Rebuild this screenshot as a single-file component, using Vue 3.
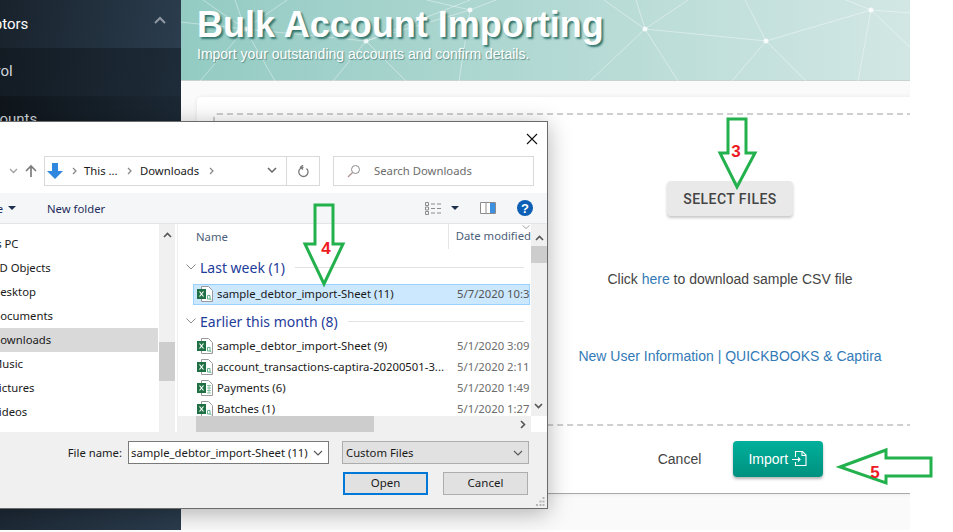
<script setup>
const navItems = [
  { label: "This PC", indent: 39 },
  { label: "3D Objects", indent: 52 },
  { label: "Desktop", indent: 51 },
  { label: "Documents", indent: 51 },
  { label: "Downloads", indent: 51, active: true },
  { label: "Music", indent: 51 },
  { label: "Pictures", indent: 51 },
  { label: "Videos", indent: 51 },
  { label: "OS (C:)", indent: 51 },
];

const recentFiles = [
  { name: "sample_debtor_import-Sheet (9)", date: "5/1/2020 3:09 PM", kind: "csv" },
  { name: "account_transactions-captira-20200501-3...", date: "5/1/2020 2:11 PM", kind: "csv" },
  { name: "Payments (6)", date: "5/1/2020 1:49 PM", kind: "xls" },
  { name: "Batches (1)", date: "5/1/2020 1:27 PM", kind: "csv" },
];

const netNodes = [
  [65, 29], [290, 10], [186, 41], [465, 29], [586, 41], [691, 10],
];

const netLines = [
  [65, 29, 0, 22], [65, 29, 23, 0], [65, 29, 55, 0], [65, 29, 107, 0], [65, 29, 20, 81], [65, 29, 95, 81],
  [65, 29, 186, 41], [290, 10, 247, 0], [290, 10, 316, 0], [290, 10, 186, 41], [290, 10, 279, 81],
  [186, 41, 153, 81], [186, 41, 226, 81], [186, 41, 290, 0], [465, 29, 586, 41], [586, 41, 691, 10],
  [465, 29, 508, 0], [465, 29, 456, 0], [465, 29, 424, 0], [465, 29, 410, 81], [465, 29, 498, 81],
  [586, 41, 552, 81], [586, 41, 626, 81], [586, 41, 565, 0], [691, 10, 678, 81], [691, 10, 730, 47],
  [691, 10, 730, 13], [691, 10, 666, 0],
];
</script>

<template>
  <div class="screen">
    <aside class="sidebar">
      <div class="side-row side-open">
        <span class="side-label">Debtors</span>
        <svg class="side-caret" width="12" height="8" viewBox="0 0 12 8"><path d="M1 7l5-5 5 5" fill="none" stroke="#8f99a3" stroke-width="2" /></svg>
      </div>
      <div class="side-row side-sub"><span class="side-label short">Control</span></div>
      <div class="side-row side-deep"><span class="side-label wide">Accounts</span></div>
    </aside>

    <main class="main">
      <header class="banner">
        <svg class="net" width="730" height="81" viewBox="0 0 730 81">
          <line v-for="(l, i) in netLines" :key="i" :x1="l[0]" :y1="l[1]" :x2="l[2]" :y2="l[3]" stroke="#fff" stroke-opacity="0.4" />
          <circle v-for="(n, i) in netNodes" :key="i" :cx="n[0]" :cy="n[1]" r="2.5" fill="#fff" fill-opacity="0.8" />
        </svg>
        <h1 class="title">Bulk Account Importing</h1>
        <p class="subtitle">Import your outstanding accounts and confirm details.</p>
      </header>

      <div class="content">
        <section class="card">
          <div class="dropzone">
            <button class="select-btn">SELECT FILES</button>
            <p class="sample">Click <a>here</a> to download sample CSV file</p>
            <p class="links"><a>New User Information | QUICKBOOKS &amp; Captira</a></p>
          </div>
          <div class="card-foot">
            <span class="cancel">Cancel</span>
            <button class="import-btn">
              Import
              <svg width="17" height="17" viewBox="0 0 17 17" fill="none" stroke="#fff" stroke-width="1.1">
                <path d="M4.5 7V1.5h7l3.5 3.5v10.500H4.5V12" />
                <path d="M11 1.5V5.500h4" />
                <path d="M1 9.500h8M7 7.500l2 2-2 2" />
              </svg>
            </button>
          </div>
        </section>
      </div>
    </main>

    <div class="dialog">
      <div class="dlg-title">
        <svg width="12" height="12" viewBox="0 0 12 12"><path d="M1 1l10 10M11 1L1 11" stroke="#111" stroke-width="1.1" /></svg>
      </div>

      <div class="dlg-address">
        <svg class="addr-down" width="9" height="6" viewBox="0 0 9 6"><path d="M1 1l3.500 3.500L8 1" fill="none" stroke="#a0a0a0" stroke-width="1.3" /></svg>
        <svg class="addr-up" width="14" height="14" viewBox="0 0 14 14"><path d="M7 13V2M2 7l5-5 5 5" fill="none" stroke="#7d7d7d" stroke-width="1.7" /></svg>
        <div class="addr-box">
          <svg class="addr-folder" width="16" height="16" viewBox="0 0 16 16"><path d="M5 0h6v8h5l-8 8-8-8h5z" fill="#2f87de" /></svg>
          <svg class="crumb-sep" width="5" height="8" viewBox="0 0 5 8"><path d="M1 1l3 3-3 3" fill="none" stroke="#8a8a8a" stroke-width="1.3" /></svg>
          <span class="crumb crumb-this">This ...</span>
          <svg class="crumb-sep" width="5" height="8" viewBox="0 0 5 8"><path d="M1 1l3 3-3 3" fill="none" stroke="#8a8a8a" stroke-width="1.3" /></svg>
          <span class="crumb crumb-down">Downloads</span>
          <svg class="crumb-sep" width="5" height="8" viewBox="0 0 5 8"><path d="M1 1l3 3-3 3" fill="none" stroke="#8a8a8a" stroke-width="1.3" /></svg>
          <svg class="addr-more" width="10" height="7" viewBox="0 0 10 7"><path d="M1 1l4 4 4-4" fill="none" stroke="#666" stroke-width="1.5" /></svg>
        </div>
        <div class="addr-refresh">
          <svg width="12" height="13" viewBox="0 0 12 13"><path d="M9.500 3.500a4.600 4.600 0 1 1-3-1.200H3.500M6 0L3.500 2.300 6 4.500" fill="none" stroke="#7a7a7a" stroke-width="1.3" /></svg>
        </div>
        <div class="search-box">
          <svg width="14" height="14" viewBox="0 0 14 14"><circle cx="8.500" cy="5.500" r="4" fill="none" stroke="#8a8a8a" /><path d="M5.500 8.500L1 13" stroke="#b08f8f" stroke-width="1.2" /></svg>
          <span>Search Downloads</span>
        </div>
      </div>

      <div class="dlg-toolbar">
        <span class="tool-organize">Organize</span>
        <svg class="tool-caret" width="8" height="4" viewBox="0 0 8 4"><path d="M0 0h8L4 4z" fill="#1e3050" /></svg>
        <span class="tool-new">New folder</span>
        <svg class="tool-view" width="16" height="13" viewBox="0 0 16 13" fill="none" stroke="#8c8c8c">
          <path d="M.5.5h3v3h-3zM.5 5h3v3h-3zM.5 9.500h3v3h-3zM6 2h4M12 2h4M6 6.500h4M12 6.500h4M6 11h4M12 11h4" />
        </svg>
        <svg class="tool-caret2" width="8" height="4" viewBox="0 0 8 4"><path d="M0 0h8L4 4z" fill="#1e3050" /></svg>
        <svg class="tool-pane" width="16" height="12" viewBox="0 0 16 12"><path d="M.5.5h15v11H.5z" fill="#fff" stroke="#8c8c8c" /><path d="M6 .5v11" stroke="#8c8c8c" /><path d="M10 1h5v10h-5z" fill="#3d8fe0" /></svg>
        <span class="tool-help">?</span>
      </div>

      <div class="dlg-body">
        <nav class="nav-list">
          <div
            v-for="item in navItems"
            :key="item.label"
            class="nav-item"
            :class="{ active: item.active }"
            :style="{ paddingLeft: item.indent + 'px' }"
          >{{ item.label }}</div>
        </nav>
        <div class="nav-scroll">
          <svg width="9" height="6" viewBox="0 0 9 6"><path d="M1 5l3.500-3.500L8 5" fill="none" stroke="#555" stroke-width="1.6" /></svg>
          <div class="nav-thumb"></div>
        </div>

        <div class="files">
          <div class="files-main">
            <div class="file-list">
              <div class="col-head">
                <span class="col-name">Name</span>
                <span class="col-date">Date modified</span>
                <svg class="col-sort" width="8" height="4" viewBox="0 0 8 4"><path d="M.5.5L4 3.500 7.500.5" fill="none" stroke="#a5a5a5" /></svg>
              </div>

              <div class="group first">
                <svg width="10" height="6" viewBox="0 0 10 6"><path d="M.5.5L5 5 9.500.5" fill="none" stroke="#8a8a8a" /></svg>
                <span class="group-name">Last week (1)</span>
                <span class="group-rule"></span>
              </div>
              <div class="file-row selected">
                <svg width="16" height="16" viewBox="0 0 16 16">
                  <path d="M4.500.5h7l4 4v11h-11z" fill="#fff" stroke="#9a9a9a" />
                  <rect x="0" y="3" width="9" height="10" fill="#1f7145" />
                  <path d="M2.500 5.500l4 5M6.500 5.500l-4 5" stroke="#fff" stroke-width="1.2" />
                  <path d="M10.500 9.500h2.500v3.500h-2.500zM13 13l1.500 1" fill="none" stroke="#5eb28a" />
                </svg>
                <span class="file-name">sample_debtor_import-Sheet (11)</span>
                <span class="file-date">5/7/2020 10:32 AM</span>
              </div>

              <div class="group">
                <svg width="10" height="6" viewBox="0 0 10 6"><path d="M.5.5L5 5 9.500.5" fill="none" stroke="#8a8a8a" /></svg>
                <span class="group-name">Earlier this month (8)</span>
                <span class="group-rule"></span>
              </div>
              <div class="recent">
                <div v-for="file in recentFiles" :key="file.name" class="file-row">
                  <svg width="16" height="16" viewBox="0 0 16 16">
                    <path d="M4.500.5h7l4 4v11h-11z" fill="#fff" stroke="#9a9a9a" />
                    <rect x="0" y="3" width="9" height="10" fill="#1f7145" />
                    <path d="M2.500 5.500l4 5M6.500 5.500l-4 5" stroke="#fff" stroke-width="1.2" />
                    <path v-if="file.kind === 'csv'" d="M10.500 9.500h2.500v3.500h-2.500zM13 13l1.500 1" fill="none" stroke="#5eb28a" />
                    <path v-else d="M10 5.500h4M10 8h4M10 10.500h4M10 13h4M12 5v8" fill="none" stroke="#6fb592" stroke-width="0.8" />
                  </svg>
                  <span class="file-name">{{ file.name }}</span>
                  <span class="file-date">{{ file.date }}</span>
                </div>
              </div>
            </div>
            <div class="v-scroll">
              <svg width="9" height="6" viewBox="0 0 9 6"><path d="M1 5l3.500-3.500L8 5" fill="none" stroke="#555" stroke-width="1.6" /></svg>
              <div class="v-thumb"></div>
              <svg class="v-down" width="9" height="6" viewBox="0 0 9 6"><path d="M1 1l3.500 3.500L8 1" fill="none" stroke="#555" stroke-width="1.6" /></svg>
            </div>
          </div>
          <div class="h-scroll">
            <div class="h-track">
              <div class="h-thumb"></div>
              <svg width="6" height="9" viewBox="0 0 6 9"><path d="M1 1l3.500 3.500L1 8" fill="none" stroke="#555" stroke-width="1.6" /></svg>
            </div>
          </div>
        </div>
      </div>

      <div class="dlg-foot">
        <div class="foot-row">
          <span class="foot-label">File name:</span>
          <div class="foot-input">
            <span>sample_debtor_import-Sheet (11)</span>
            <svg width="10" height="6" viewBox="0 0 10 6"><path d="M1 1l4 4 4-4" fill="none" stroke="#555" stroke-width="1.1" /></svg>
          </div>
          <div class="foot-filter">
            <span>Custom Files</span>
            <svg width="10" height="6" viewBox="0 0 10 6"><path d="M1 1l4 4 4-4" fill="none" stroke="#555" stroke-width="1.1" /></svg>
          </div>
        </div>
        <div class="foot-row buttons">
          <button class="win-btn primary">Open</button>
          <button class="win-btn">Cancel</button>
        </div>
        <svg class="grip" width="9" height="9" viewBox="0 0 9 9" fill="#b5b5b5">
          <path d="M6.500 0h2v2h-2zM3.500 3.500h2v2h-2zM6.500 3.500h2v2h-2zM0 7h2v2H0zM3.500 7h2v2h-2zM6.500 7h2v2h-2z" />
        </svg>
      </div>
    </div>

    <svg class="marks" width="953" height="532" viewBox="0 0 953 532">
      <g fill="none" stroke="#22b14c" stroke-width="3">
        <polygon points="728,119 746,119 746,153 755,153 737,187 720,153 728,153" />
        <polygon points="315,205 333,205 333,244 343,244 324,284 305,244 315,244" />
        <polygon points="840,467 886,450 886,458 931,458 931,476 886,476 886,483" />
      </g>
      <g class="mark-text">
        <text x="736" y="157" text-anchor="middle">3</text>
        <text x="326" y="254" text-anchor="middle">4</text>
        <text x="875" y="478" text-anchor="middle">5</text>
      </g>
    </svg>
  </div>
</template>

<style scoped>
.screen {
  position: relative;
  display: flex;
  width: 953px;
  height: 532px;
  overflow: hidden;
  background: #fff;
  font-family: "Liberation Sans", sans-serif;
}

.sidebar {
  width: 181px;
  height: 530px;
  flex: none;
  background: linear-gradient(100deg, #16202a, #2b3c4d);
  color: #cfd5da;
  font-family: Roboto, sans-serif;
  font-size: 15px;
}
.side-row {
  position: relative;
  display: flex;
  align-items: center;
  height: 48px;
}
.side-open {
  background: linear-gradient(100deg, #18222c, #2b3d4e);
  color: #fff;
}
.side-sub {
  background: linear-gradient(100deg, #131b23, #1e2c39);
  padding-bottom: 2px;
  box-sizing: border-box;
}
.side-deep {
  background: linear-gradient(100deg, #0f151b, #1c2935);
  padding-bottom: 2px;
  box-sizing: border-box;
}
.side-label {
  margin-left: -24px;
}
.side-label.short {
  margin-left: -36px;
}
.side-label.wide {
  margin-left: -26px;
}
.side-caret {
  position: absolute;
  left: 154px;
  top: 16px;
}

.main {
  width: 729px;
  height: 530px;
  flex: none;
  overflow: hidden;
  background: #fafafa;
}
.banner {
  position: relative;
  height: 81px;
  box-sizing: border-box;
  padding: 6px 0 0 16px;
  background: linear-gradient(90deg, #93cbc3, #d2e7e4);
  border-bottom: 1px solid #c9d2d0;
  color: #fff;
}
.net {
  position: absolute;
  left: -1px;
  top: 0;
}
.title {
  position: relative;
  margin: 0;
  font-size: 36px;
  line-height: 38px;
  font-weight: 700;
  text-shadow: 2px 2px 2px #34766f;
}
.subtitle {
  position: relative;
  margin: 1px 0 0;
  font-size: 14px;
  line-height: 18px;
  text-shadow: 1px 1px 1px #5a8f89;
}

.content {
  padding: 16px;
}
.card {
  display: flex;
  flex-direction: column;
  width: 1066px;
  height: 397px;
  box-sizing: border-box;
  padding: 16px 16px 0;
  background: #fff;
  border-bottom: 1px solid #a9a9a9;
  border-radius: 4px 4px 0 0;
  box-shadow: 0 0 4px rgba(0, 0, 0, 0.08);
}
.dropzone {
  display: flex;
  flex-direction: column;
  align-items: center;
  height: 313px;
  flex: none;
  box-sizing: border-box;
  padding-top: 66px;
  border: 2px dashed #cfcfcf;
  border-radius: 4px;
}
.select-btn {
  width: 126px;
  height: 35px;
  padding: 0;
  border: none;
  border-radius: 4px;
  background: #e9e9e9;
  box-shadow: 0 2px 3px rgba(0, 0, 0, 0.22);
  color: #444;
  font-family: Roboto, sans-serif;
  font-size: 14px;
  font-weight: 500;
  letter-spacing: 0.45px;
}
.sample {
  margin: 53px 0 0;
  color: #444;
  font-size: 14px;
  line-height: 20px;
}
.links {
  margin: 57px 0 0;
  font-size: 14px;
  line-height: 20px;
}
.sample a,
.links a {
  color: #337ab7;
}
.card-foot {
  display: flex;
  flex: 1;
  align-items: center;
  justify-content: center;
  gap: 32px;
  padding: 0 0 2px 21px;
}
.cancel {
  color: #444;
  font-size: 14px;
}
.import-btn {
  display: flex;
  align-items: center;
  justify-content: center;
  gap: 3px;
  width: 90px;
  height: 36px;
  padding: 0;
  border: none;
  border-radius: 4px;
  background: linear-gradient(180deg, #00b09b, #00917f);
  box-shadow: 0 2px 3px rgba(0, 0, 0, 0.3);
  color: #fff;
  font-family: inherit;
  font-size: 14px;
}

/* file picker window, hangs off the left edge of the page */
.dialog {
  position: absolute;
  left: -60px;
  top: 121px;
  display: flex;
  flex-direction: column;
  width: 608px;
  height: 388px;
  box-sizing: border-box;
  border: 1px solid #6b6b6b;
  background: #fff;
  box-shadow: 0 4px 22px rgba(0, 0, 0, 0.3);
  color: #1a1a1a;
  font-family: "Noto Sans", "Open Sans", sans-serif;
  font-size: 11.3px;
}
.dlg-title {
  display: flex;
  align-items: center;
  justify-content: flex-end;
  height: 34px;
  flex: none;
  padding-right: 9px;
  box-sizing: border-box;
}
.dlg-address {
  display: flex;
  align-items: center;
  height: 30px;
  flex: none;
  margin-bottom: 7px;
  padding-left: 68px;
}
.addr-down,
.addr-up {
  margin-right: 6px;
  flex: none;
}
.addr-box {
  display: flex;
  align-items: center;
  width: 243px;
  height: 30px;
  box-sizing: border-box;
  padding-left: 2px;
  padding-bottom: 1px;
  border: 1px solid #d9d9d9;
}
.addr-box svg {
  flex: none;
}
.addr-box .crumb-sep {
  margin-left: 9px;
}
.crumb-this {
  margin-left: 7px;
  width: 34px;
}
.crumb-down {
  margin-left: 8px;
  width: 60px;
}
.addr-box .addr-more {
  margin-left: auto;
  margin-right: 9px;
}
.crumb {
  white-space: nowrap;
}
.addr-refresh {
  display: flex;
  align-items: center;
  justify-content: center;
  width: 33px;
  height: 30px;
  box-sizing: border-box;
  border: 1px solid #d9d9d9;
  border-left: none;
}
.search-box {
  display: flex;
  align-items: center;
  gap: 13px;
  width: 201px;
  height: 30px;
  box-sizing: border-box;
  margin-left: 13px;
  padding-left: 13px;
  padding-bottom: 1px;
  border: 1px solid #d9d9d9;
  color: #6d6d6d;
}
.dlg-toolbar {
  display: flex;
  align-items: center;
  height: 31px;
  flex: none;
  box-sizing: border-box;
  background: #f5f6f7;
  border-bottom: 1px solid #e5e5e5;
  color: #1e2e5c;
}
.tool-organize {
  width: 48px;
  margin-left: 14px;
  text-align: right;
  white-space: nowrap;
}
.tool-caret {
  margin-left: 5px;
}
.tool-new {
  width: 60px;
  margin-left: 31px;
  white-space: nowrap;
}
.tool-view {
  margin-left: 318px;
}
.tool-caret2 {
  margin-left: 10px;
}
.tool-pane {
  margin-left: 21px;
}
.tool-help {
  display: flex;
  align-items: center;
  justify-content: center;
  width: 16px;
  height: 16px;
  margin-left: 21px;
  border-radius: 50%;
  background: #0c5fb4;
  color: #fff;
  font-family: "Liberation Sans", sans-serif;
  font-size: 13px;
  font-weight: 700;
}
.dlg-body {
  display: flex;
  height: 208px;
  flex: none;
}
.nav-list {
  width: 217px;
  flex: none;
  padding-top: 8px;
  box-sizing: border-box;
  overflow: hidden;
}
.nav-item {
  height: 24px;
  line-height: 24px;
  box-sizing: border-box;
  white-space: nowrap;
}
.nav-item.active {
  background: #d9d9d9;
}
.nav-scroll {
  width: 16px;
  flex: none;
  margin-left: 1px;
  padding-top: 8px;
  box-sizing: border-box;
  background: #f0f0f0;
}
.nav-scroll svg {
  display: block;
  margin: 0 auto;
}
.nav-thumb {
  height: 39px;
  margin-top: 104px;
  background: #cdcdcd;
}
.files {
  display: flex;
  flex-direction: column;
  flex: 1;
  min-width: 0;
  margin-left: 2px;
  border-left: 1px solid #eeeeee;
}
.files-main {
  display: flex;
  height: 192px;
  flex: none;
}
.file-list {
  flex: 1;
  min-width: 0;
  overflow: hidden;
}
.col-head {
  position: relative;
  display: flex;
  height: 26px;
  align-items: center;
  padding-bottom: 2px;
  box-sizing: border-box;
  color: #4c607a;
}
.col-name {
  width: 254px;
  margin-left: 18px;
}
.col-date {
  height: 26px;
  margin-left: 5px;
  padding-left: 7px;
  line-height: 26px;
  border-left: 1px solid #e5e5e5;
  white-space: nowrap;
}
.col-sort {
  position: absolute;
  left: 344px;
  top: 1px;
}
.group {
  display: flex;
  align-items: center;
  height: 24px;
  margin-left: 8px;
  margin-right: 7px;
  color: #1e3c9a;
  font-size: 14px;
}
.group svg {
  flex: none;
}
.group.first {
  margin-top: 5px;
  margin-bottom: 5px;
}
.group-name {
  margin-left: 4px;
  white-space: nowrap;
}
.group-rule {
  flex: 1;
  height: 1px;
  margin-left: 10px;
  background: #e3e3e3;
}
.recent {
  margin-top: 3px;
}
.file-row {
  display: flex;
  align-items: center;
  width: 337px;
  height: 21px;
  margin-left: 15px;
  padding-left: 4px;
  padding-bottom: 2px;
  box-sizing: border-box;
  overflow: hidden;
  white-space: nowrap;
}
.file-row svg {
  flex: none;
}
.file-row.selected {
  margin-bottom: 4px;
  background: #cce8ff;
  border: 1px solid #99d1ff;
  padding-left: 3px;
}
.file-name {
  width: 244px;
  flex: none;
  padding-left: 4px;
  box-sizing: border-box;
}
.file-date {
  flex: none;
  color: #6d6d6d;
}
.selected .file-date {
  color: #555;
}
.v-scroll {
  position: relative;
  width: 16px;
  flex: none;
  padding-top: 11px;
  box-sizing: border-box;
  background: #f0f0f0;
}
.v-scroll svg {
  display: block;
  margin: 0 auto;
}
.v-thumb {
  height: 17px;
  margin-top: 5px;
  background: #cdcdcd;
}
.v-scroll .v-down {
  position: absolute;
  left: 3px;
  top: 179px;
}
.h-scroll {
  height: 16px;
  flex: none;
}
.h-track {
  display: flex;
  align-items: center;
  justify-content: space-between;
  height: 100%;
  margin-right: 16px;
  padding-right: 5px;
  box-sizing: border-box;
  background: #f0f0f0;
}
.h-thumb {
  width: 178px;
  height: 100%;
  margin-left: 18px;
  background: #cdcdcd;
}
.dlg-foot {
  position: relative;
  flex: 1;
  padding-top: 9px;
  box-sizing: border-box;
  background: #f0f0f0;
}
.foot-row {
  display: flex;
  justify-content: flex-end;
  align-items: center;
  padding-right: 18px;
}
.foot-label {
  margin-right: 6px;
}
.foot-input,
.foot-filter {
  display: flex;
  align-items: center;
  justify-content: space-between;
  height: 23px;
  flex: none;
  box-sizing: border-box;
  padding: 0 5px 0 2px;
  white-space: nowrap;
}
.foot-input svg,
.foot-filter svg {
  flex: none;
}
.foot-input {
  width: 201px;
  background: #fff;
  border: 1px solid #7a7a7a;
}
.foot-filter {
  width: 187px;
  margin-left: 13px;
  padding-left: 3px;
  background: #e1e1e1;
  border: 1px solid #adadad;
}
.foot-row.buttons {
  gap: 15px;
  margin-top: 8px;
  padding-right: 19px;
}
.win-btn {
  width: 85px;
  height: 23px;
  padding: 0 0 2px;
  background: #e1e1e1;
  border: 1px solid #adadad;
  color: #1a1a1a;
  font-family: inherit;
  font-size: 11.5px;
}
.win-btn.primary {
  border: 2px solid #0078d7;
}
.grip {
  position: absolute;
  right: 2px;
  bottom: 2px;
}

.marks {
  position: absolute;
  left: 0;
  top: 0;
  pointer-events: none;
}
.mark-text {
  fill: #ed1c24;
  font-size: 17px;
  font-weight: 700;
}
</style>
